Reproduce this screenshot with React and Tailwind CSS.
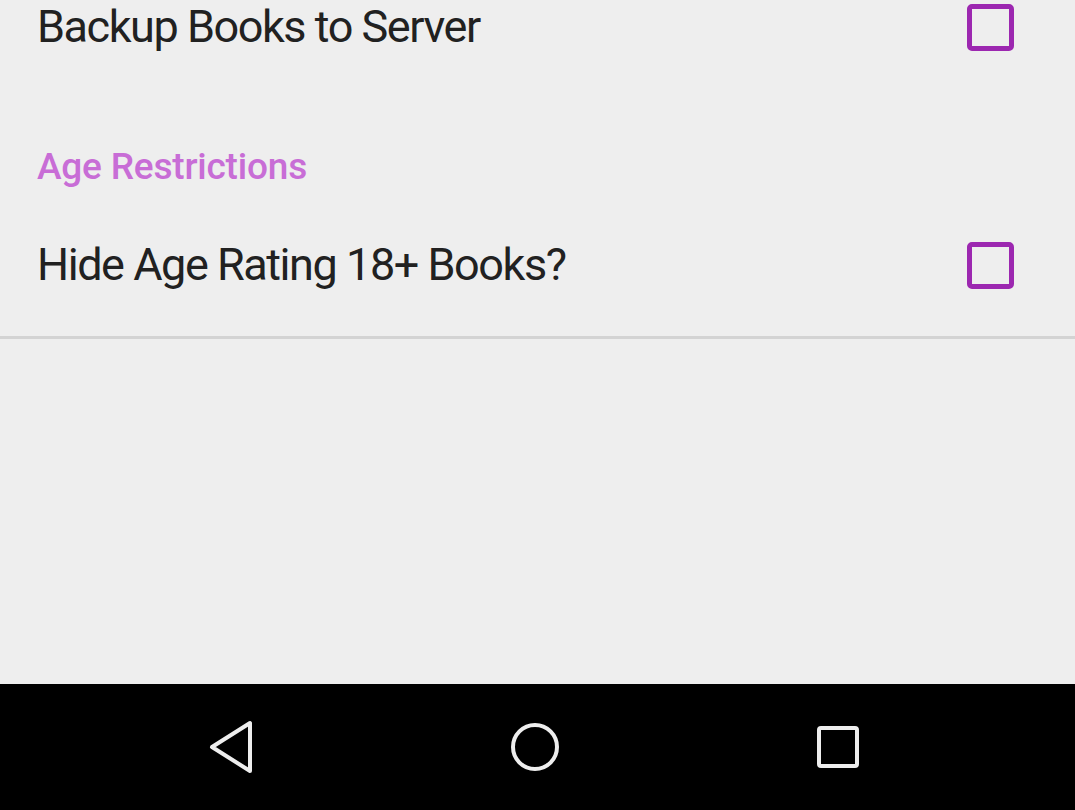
import React from 'react';

function Checkbox() {
    return (
        <div className="w-[47px] h-[47px] rounded-[5px] border-[5px] border-[#9c27b0] shrink-0" />
    );
}

function PrefRow({ title, className }) {
    return (
        <div className={`flex items-center justify-between pl-[37px] pr-[61px] ${className}`}>
            <span className="text-[45px] leading-[54px] tracking-[-1.45px] text-[#212121]">{title}</span>
            <Checkbox />
        </div>
    );
}

export default function App() {
    return (
        <div
            className="w-[1075px] h-[810px] flex flex-col bg-[#eeeeee] overflow-hidden"
            style={{ fontFamily: 'Roboto, "Noto Sans", sans-serif' }}
        >
            <div className="flex-1 flex flex-col">
                <PrefRow title="Backup Books to Server" className="h-[54px]" />

                {/* Category header */}
                <div className="h-[140px] pt-[92px] pl-[37px]">
                    <span className="block text-[37px] leading-[42px] tracking-[-0.2px] font-medium text-[#c86dd6]">Age Restrictions</span>
                </div>

                <PrefRow title="Hide Age Rating 18+ Books?" className="h-[142px]" />
                <div className="h-[3px] bg-[#d3d3d3]" />
            </div>

            {/* Navigation bar */}
            <div className="h-[126px] bg-black flex items-center justify-center gap-[255px] pr-[6px]">
                <svg width="48" height="54" viewBox="0 0 48 54" fill="none" stroke="#eeeeee" strokeWidth="4" strokeLinejoin="round">
                    <path d="M4 27 L42 3 L42 51 Z" />
                </svg>
                <svg width="48" height="48" viewBox="0 0 48 48" fill="none" stroke="#eeeeee" strokeWidth="4">
                    <circle cx="24" cy="24" r="22" />
                </svg>
                <svg width="48" height="48" viewBox="0 0 48 48" fill="none" stroke="#eeeeee" strokeWidth="4">
                    <rect x="5" y="5" width="38" height="38" rx="2" />
                </svg>
            </div>
        </div>
    );
}
